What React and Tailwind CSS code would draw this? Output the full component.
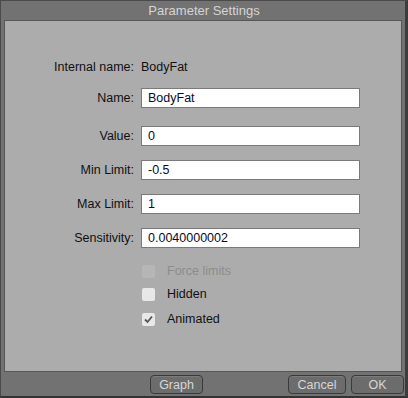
import React, { useState } from 'react';

const font = { fontFamily: '"Liberation Sans", Arial, sans-serif' };

function Field({ label, value, className = '' }) {
  return (
    <div className={`flex items-center ${className}`}>
      <label className="w-[136px] pr-[7px] text-right text-[12.5px] text-[#111]">{label}</label>
      <input
        defaultValue={value}
        className="h-[20px] w-[219px] border border-[#7a7a7a] bg-white px-[6px] text-[12.5px] text-[#0a0a28] outline-none"
      />
    </div>
  );
}

function Check({ label, checked, disabled, className = '' }) {
  const [on, setOn] = useState(checked);
  return (
    <div className={`flex h-[14px] items-center ${className}`}>
      <div className="w-[137px]" />
      <button
        onClick={() => !disabled && setOn(!on)}
        className={`flex h-[13px] w-[13px] items-center justify-center rounded-[2px] ${
          disabled ? 'bg-[#b6b6b6]' : 'bg-[#e8e8e8]'
        }`}
      >
        {on && (
          <svg width="9" height="9" viewBox="0 0 9 9">
            <path d="M1 4.5 L3.5 7 L8 1.5" fill="none" stroke="#555" strokeWidth="1.8" />
          </svg>
        )}
      </button>
      <span className={`ml-[12px] text-[12.5px] ${disabled ? 'text-[#8c8c8c]' : 'text-[#111]'}`}>{label}</span>
    </div>
  );
}

function Btn({ children, className = '' }) {
  return (
    <button
      className={`h-[19px] rounded-[4px] border border-[#3a3a3a] bg-[#6c6c6c] text-[12.5px] text-[#d6d6d6] shadow-[inset_0_1px_0_#7c7c7c] ${className}`}
    >
      {children}
    </button>
  );
}

export default function App() {
  return (
    <div
      style={font}
      className="flex h-[398px] w-[408px] flex-col border-t border-l border-r-[3px] border-b-[2px] border-t-[#4a4a4a] border-l-[#4a4a4a] border-r-[#3c3c3c] border-b-[#333] bg-[#727272]"
    >
      {/* Title */}
      <div className="flex h-[19px] items-center justify-center pl-[2px] pt-[1px] text-[13px] text-[#d4d4d4]">
        Parameter Settings
      </div>

      {/* Content panel */}
      <div className="mx-[3px] h-[352px] border border-[#575757] bg-[#acacac] pt-[36px]">
        <div className="flex h-[20px] items-center">
          <span className="w-[136px] pr-[7px] text-right text-[12.5px] text-[#111]">Internal name:</span>
          <span className="text-[12.5px] text-[#111]">BodyFat</span>
        </div>
        <Field label="Name:" value="BodyFat" className="mt-[11px]" />
        <Field label="Value:" value="0" className="mt-[18px]" />
        <Field label="Min Limit:" value="-0.5" className="mt-[14px]" />
        <Field label="Max Limit:" value="1" className="mt-[14px]" />
        <Field label="Sensitivity:" value="0.0040000002" className="mt-[14px]" />

        <Check label="Force limits" disabled className="mt-[16px]" />
        <Check label="Hidden" className="mt-[9px]" />
        <Check label="Animated" checked className="mt-[11px]" />
      </div>

      {/* Bottom buttons */}
      <div className="flex flex-1 items-center pt-[1px]">
        <Btn className="ml-[149px] w-[53px]">Graph</Btn>
        <Btn className="ml-[85px] w-[58px]">Cancel</Btn>
        <Btn className="ml-[5px] w-[53px]">OK</Btn>
      </div>
    </div>
  );
}
